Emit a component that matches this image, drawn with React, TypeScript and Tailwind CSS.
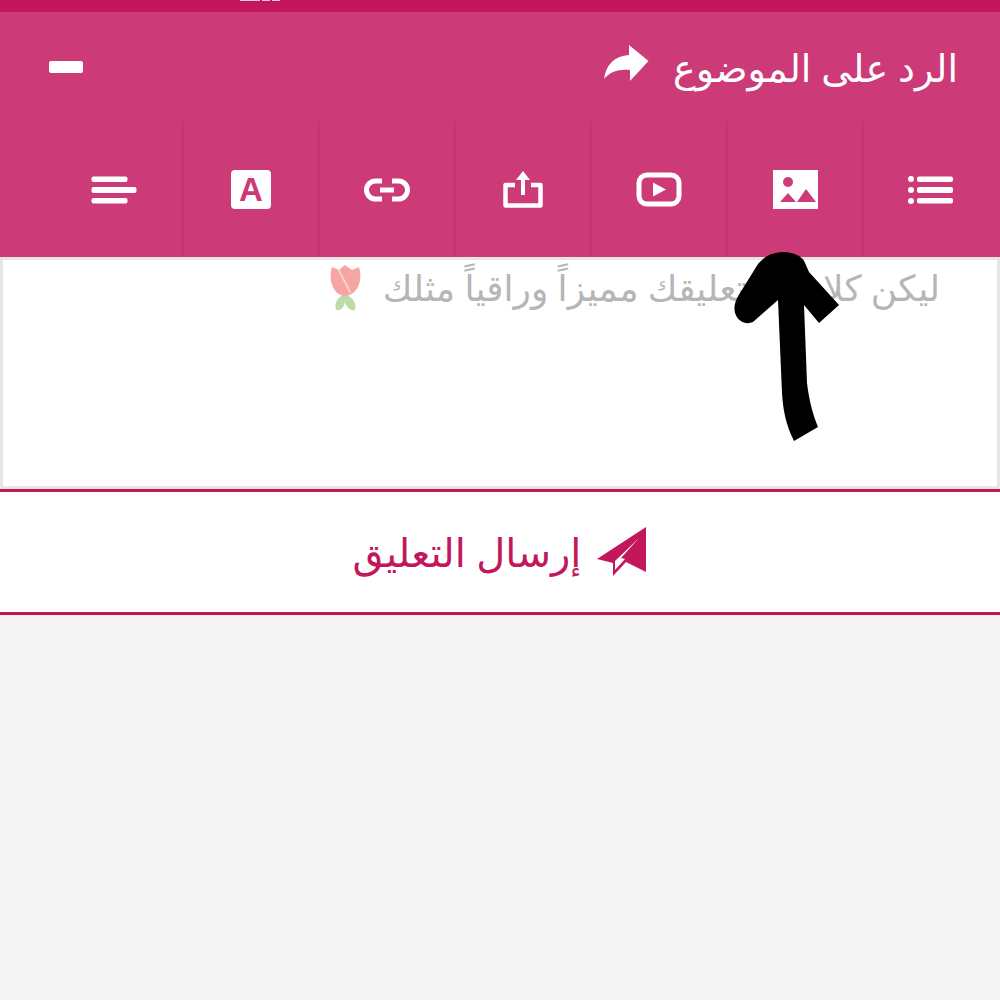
const arabicFont = "font-['Noto_Sans','DejaVu_Sans',serif]";

const Cell = ({ children, first }: { children: React.ReactNode; first?: boolean }) => (
  <div className={`flex h-full w-[136px] shrink-0 items-center justify-center ${first ? "" : "border-l-2 border-[#c23570]"}`}>
    {children}
  </div>
);

const ListIcon = () => (
  <svg width="46" height="28" viewBox="0 0 46 28" fill="#fff">
    <circle cx="3" cy="3" r="3" />
    <circle cx="3" cy="14" r="3" />
    <circle cx="3" cy="25" r="3" />
    <rect x="9" y="0.5" width="36" height="5.5" rx="2" />
    <rect x="9" y="11" width="36" height="6" rx="2" />
    <rect x="9" y="22" width="36" height="5.5" rx="2" />
  </svg>
);

const ImageIcon = () => (
  <svg width="45" height="39" viewBox="0 0 45 39">
    <rect width="45" height="39" fill="#fff" />
    <circle cx="15" cy="12" r="5" fill="#cc3a78" />
    <path d="M7 32 15 23l8 9ZM24 32l9-13 10 13Z" fill="#cc3a78" />
  </svg>
);

const VideoIcon = () => (
  <svg width="46" height="35" viewBox="0 0 46 35">
    <rect x="3" y="3" width="40" height="29" rx="8" fill="none" stroke="#fff" strokeWidth="5" />
    <path d="M17 10.5 30 17.5 17 24.5Z" fill="#fff" />
  </svg>
);

const UploadIcon = () => (
  <svg width="40" height="37" viewBox="0 0 40 37" fill="none">
    <path d="M12 14H2.5v20.5h35V14H28" stroke="#fff" strokeWidth="4.5" strokeLinejoin="round" />
    <path d="M20 0l7 9h-5v15h-4V9h-5Z" fill="#fff" />
  </svg>
);

const LinkIcon = () => (
  <svg width="46" height="24" viewBox="0 0 46 24" fill="none" stroke="#fff">
    <path d="M18 3h-6.5a9 9 0 0 0 0 18H18" strokeWidth="5" />
    <path d="M28 3h6.500a9 9 0 0 1 0 18H28" strokeWidth="5" />
    <path d="M16 12h14" strokeWidth="5" />
  </svg>
);

const FontIcon = () => (
  <div className="flex h-[39px] w-[40px] items-center justify-center rounded-[4px] bg-white font-['Liberation_Sans',sans-serif] text-[33px] font-bold leading-none text-[#cc3a78]">
    A
  </div>
);

const AlignIcon = () => (
  <svg width="46" height="28" viewBox="0 0 46 28" fill="#fff">
    <rect x="0.500" y="0.500" width="36" height="5.500" rx="2" />
    <rect x="0.500" y="11" width="45" height="6" rx="2" />
    <rect x="0.500" y="22" width="36" height="5.500" rx="2" />
  </svg>
);

const ReplyIcon = () => (
  <svg width="45" height="37" viewBox="0 0 45 37" fill="#fff">
    <path d="M25 0 44.500 16 26 36V25C14 24 6 27 0 34 2 20 10 11 25 10Z" />
  </svg>
);

const PlaneIcon = () => (
  <svg width="50" height="50" viewBox="0 0 50 50" fill="#c2185b">
    <path
      fillRule="evenodd"
      d="M49 0V45L29 35 16 49V36L0 32ZM42 11 18 34V43L28 32 24 31Z"
    />
  </svg>
);

const TulipIcon = () => (
  <svg width="35" height="48" viewBox="0 0 35 48">
    <path d="M17 30C9 33 6 40 8 46 14 47 17 42 17 36 17 42 21 47 27 46 29 40 25 33 17 30Z" fill="#bcdba8" />
    <path d="M4 3 11 6 17 1 24 6 31 3C35 16 30 31 17 32 5 31 0 16 4 3Z" fill="#f6a6a2" />
    <path d="M11 6C14 14 20 22 22 29" fill="none" stroke="#fbd0cc" strokeWidth="2" />
  </svg>
);

const HandDrawnArrow = () => (
  <svg className="absolute left-[730px] top-[250px]" width="112" height="194" viewBox="730 250 112 194" fill="#000">
    <path d="M776 253C786 250 802 254 805 263L809 272 839 305 819 323 804 305 807 383C809 400 813 415 818 427L794 441C786 425 783 410 782 393L778 300 753 322C746 325 738 322 735 313 733 305 737 298 740 293L758 264C763 258 769 254 776 253Z" />
  </svg>
);

export default function App() {
  return (
    <div className={`relative flex h-[1000px] flex-col overflow-hidden bg-[#f4f4f4] ${arabicFont}`}>
      <div className="h-3 shrink-0 bg-[#c2185b]">
        <div className="flex gap-[2px] pl-[240px]">
          <div className="h-[1px] w-[20px] bg-[#f3c6d8]" />
          <div className="h-[1px] w-[8px] bg-[#f3c6d8]" />
          <div className="h-[1px] w-[8px] bg-[#f3c6d8]" />
        </div>
      </div>

      <header className="flex h-[110px] shrink-0 items-center justify-between bg-[#cc3a78] pl-[49px] pr-[42px]">
        <div className="h-3 w-[34px] rounded-[2px] bg-white" />
        <div className="flex items-center gap-6" dir="rtl">
          <span className="text-[38px] leading-none text-white">الرد على الموضوع</span>
          <div className="-scale-x-100 -translate-y-1">
            <div className="-scale-x-100">
              <ReplyIcon />
            </div>
          </div>
        </div>
      </header>

      <div className="flex h-[135px] shrink-0 flex-row-reverse bg-[#cc3a78] pr-[2px]">
        <Cell><ListIcon /></Cell>
        <Cell><ImageIcon /></Cell>
        <Cell><VideoIcon /></Cell>
        <Cell><UploadIcon /></Cell>
        <Cell><LinkIcon /></Cell>
        <Cell><FontIcon /></Cell>
        <Cell first><AlignIcon /></Cell>
      </div>

      <div className="h-[232px] shrink-0 border-x-[3px] border-b-[3px] border-t-[3px] border-[#e6e6e6] bg-white pr-[57px]" dir="rtl">
        <div className="flex items-center gap-5 pt-[2px]">
          <span className="text-[36px] leading-[52px] text-[#b6b6b6]">ليكن كلامك وتعليقك مميزاً وراقياً مثلك</span>
          <TulipIcon />
        </div>
      </div>

      <div className="flex h-[126px] shrink-0 items-center justify-center gap-4 border-y-[3px] border-[#c2185b] bg-white" dir="rtl">
        <PlaneIcon />
        <span className="text-[40px] leading-none text-[#c2185b]">إرسال التعليق</span>
      </div>

      <HandDrawnArrow />
    </div>
  );
}
